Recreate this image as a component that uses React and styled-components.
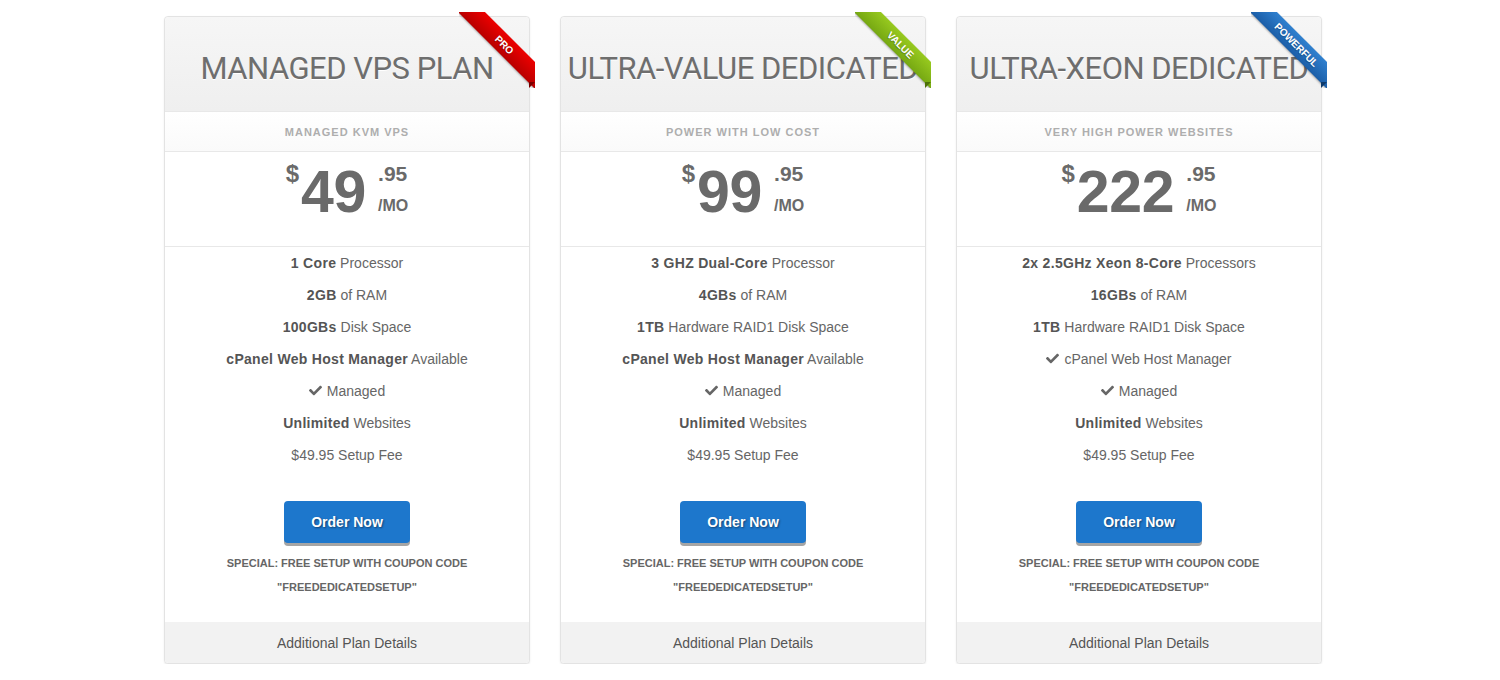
import React from 'react';
import styled, { createGlobalStyle } from 'styled-components';
import { FaCheck } from 'react-icons/fa';

const GlobalStyle = createGlobalStyle`
  body {
    margin: 0;
    background: #fff;
    font-family: "Liberation Sans", Arial, sans-serif;
  }
`;

const Page = styled.div`
  display: flex;
  gap: 30px;
  padding: 16px 0 0 164px;
`;

const Card = styled.div`
  position: relative;
  width: 366px;
  box-sizing: border-box;
  border: 1px solid #e3e3e3;
  border-radius: 4px;
  box-shadow: 0 1px 2px rgba(0, 0, 0, 0.08);
  background: #fff;
`;

const Header = styled.div`
  height: 94px;
  display: flex;
  align-items: center;
  justify-content: center;
  background: linear-gradient(#f6f6f6, #efefef);
  border-radius: 4px 4px 0 0;
  h2 {
    margin: 0;
    padding-top: 8px;
    font-family: Roboto, "Liberation Sans", sans-serif;
    font-weight: 400;
    font-size: 31px;
    letter-spacing: -0.5px;
    color: #6e6e6e;
    text-shadow: 0 1px 0 #fff;
    white-space: nowrap;
  }
`;

const Ribbon = styled.div`
  position: absolute;
  top: -5px;
  right: -6px;
  width: 76px;
  height: 76px;
  overflow: hidden;
  span {
    position: absolute;
    left: -16px;
    top: 22px;
    width: 120px;
    height: 19px;
    line-height: 19px;
    transform: rotate(45deg);
    background: ${(p) => p.bg};
    color: #fff;
    font-size: 10px;
    font-weight: 700;
    text-align: center;
    text-transform: uppercase;
    text-shadow: 0 1px 1px rgba(0, 0, 0, 0.3);
    box-shadow: 0 1px 2px rgba(0, 0, 0, 0.3);
    padding-left: 4px;
    box-sizing: border-box;
  }
`;

const Fold = styled.div`
  position: absolute;
  right: -6px;
  top: 65px;
  width: 0;
  height: 0;
  border-left: 6px solid ${(p) => p.color};
  border-bottom: 6px solid transparent;
`;

const Sub = styled.div`
  height: 39px;
  display: flex;
  align-items: center;
  justify-content: center;
  border-top: 1px solid #e8e8e8;
  border-bottom: 1px solid #e8e8e8;
  background: linear-gradient(#fff, #fafafa);
  font-size: 11px;
  font-weight: 700;
  letter-spacing: 1px;
  color: #aeaeae;
  text-transform: uppercase;
`;

const Price = styled.div`
  height: 95px;
  box-sizing: border-box;
  border-bottom: 1px solid #e8e8e8;
  display: flex;
  justify-content: center;
  align-items: flex-start;
  padding-top: 8px;
  color: #6a6a6a;
  font-weight: 700;
`;

const Dollar = styled.span`
  font-size: 24px;
  line-height: 28px;
  margin-right: 2px;
`;

const Amount = styled.span`
  font-size: 59px;
  line-height: 64px;
  letter-spacing: -0.3px;
  margin-right: 12px;
`;

const Cents = styled.div`
  display: flex;
  flex-direction: column;
  span:first-child {
    font-size: 21px;
    line-height: 28px;
  }
  span:last-child {
    font-size: 16px;
    line-height: 20px;
    margin-top: 8px;
  }
`;

const Features = styled.ul`
  margin: 0;
  padding: 0;
  list-style: none;
  text-align: center;
  li {
    font-size: 14px;
    line-height: 32px;
    color: #666;
    b {
      color: #555;
      letter-spacing: 0.3px;
    }
    svg {
      font-size: 13px;
      vertical-align: -1px;
      margin-right: 5px;
      color: #666;
    }
  }
`;

const Actions = styled.div`
  display: flex;
  flex-direction: column;
  align-items: center;
  padding: 30px 20px 23px;
`;

const OrderButton = styled.button`
  width: 126px;
  height: 42px;
  border: none;
  border-radius: 4px;
  background: #1d77cc;
  box-shadow: 0 3px 0 #a5a5a5;
  color: #fff;
  font-family: "Liberation Sans", Arial, sans-serif;
  font-size: 14px;
  font-weight: 700;
  text-shadow: 1px 1px 2px rgba(0, 0, 0, 0.45);
  cursor: pointer;
`;

const Special = styled.p`
  margin: 8px 0 0;
  font-size: 11px;
  font-weight: 700;
  line-height: 24px;
  color: #666;
  text-align: center;
  text-transform: uppercase;
`;

const Footer = styled.div`
  height: 41px;
  display: flex;
  align-items: center;
  justify-content: center;
  background: #f2f2f2;
  border-radius: 0 0 4px 4px;
  font-size: 14px;
  color: #555;
`;

const plans = [
  {
    title: 'MANAGED VPS PLAN',
    ribbon: 'Pro',
    ribbonBg: 'linear-gradient(#ec0000, #b80000)',
    fold: '#7a0000',
    sub: 'Managed KVM VPS',
    amount: '49',
    features: [
      <><b>1 Core</b> Processor</>,
      <><b>2GB</b> of RAM</>,
      <><b>100GBs</b> Disk Space</>,
      <><b>cPanel Web Host Manager</b> Available</>,
      <><FaCheck />Managed</>,
      <><b>Unlimited</b> Websites</>,
      <>$49.95 Setup Fee</>,
    ],
  },
  {
    title: 'ULTRA-VALUE DEDICATED',
    ribbon: 'Value',
    ribbonBg: 'linear-gradient(#97c91f, #76a812)',
    fold: '#4d7008',
    sub: 'Power with low cost',
    amount: '99',
    features: [
      <><b>3 GHZ Dual-Core</b> Processor</>,
      <><b>4GBs</b> of RAM</>,
      <><b>1TB</b> Hardware RAID1 Disk Space</>,
      <><b>cPanel Web Host Manager</b> Available</>,
      <><FaCheck />Managed</>,
      <><b>Unlimited</b> Websites</>,
      <>$49.95 Setup Fee</>,
    ],
  },
  {
    title: 'ULTRA-XEON DEDICATED',
    ribbon: 'Powerful',
    ribbonBg: 'linear-gradient(#2f80cf, #1b5ea8)',
    fold: '#0e3a6b',
    sub: 'Very high power websites',
    amount: '222',
    features: [
      <><b>2x 2.5GHz Xeon 8-Core</b> Processors</>,
      <><b>16GBs</b> of RAM</>,
      <><b>1TB</b> Hardware RAID1 Disk Space</>,
      <><FaCheck />cPanel Web Host Manager</>,
      <><FaCheck />Managed</>,
      <><b>Unlimited</b> Websites</>,
      <>$49.95 Setup Fee</>,
    ],
  },
];

const App = () => {
  return (
    <>
      <GlobalStyle />
      <Page>
        {plans.map((plan) => (
          <Card key={plan.title}>
            <Header>
              <h2>{plan.title}</h2>
            </Header>
            <Ribbon bg={plan.ribbonBg}>
              <span>{plan.ribbon}</span>
            </Ribbon>
            <Fold color={plan.fold} />
            <Sub>{plan.sub}</Sub>
            <Price>
              <Dollar>$</Dollar>
              <Amount>{plan.amount}</Amount>
              <Cents>
                <span>.95</span>
                <span>/MO</span>
              </Cents>
            </Price>
            <Features>
              {plan.features.map((f, i) => (
                <li key={i}>{f}</li>
              ))}
            </Features>
            <Actions>
              <OrderButton>Order Now</OrderButton>
              <Special>
                Special: Free setup with coupon code
                <br />
                "FREEDEDICATEDSETUP"
              </Special>
            </Actions>
            <Footer>Additional Plan Details</Footer>
          </Card>
        ))}
      </Page>
    </>
  );
};

export default App;
